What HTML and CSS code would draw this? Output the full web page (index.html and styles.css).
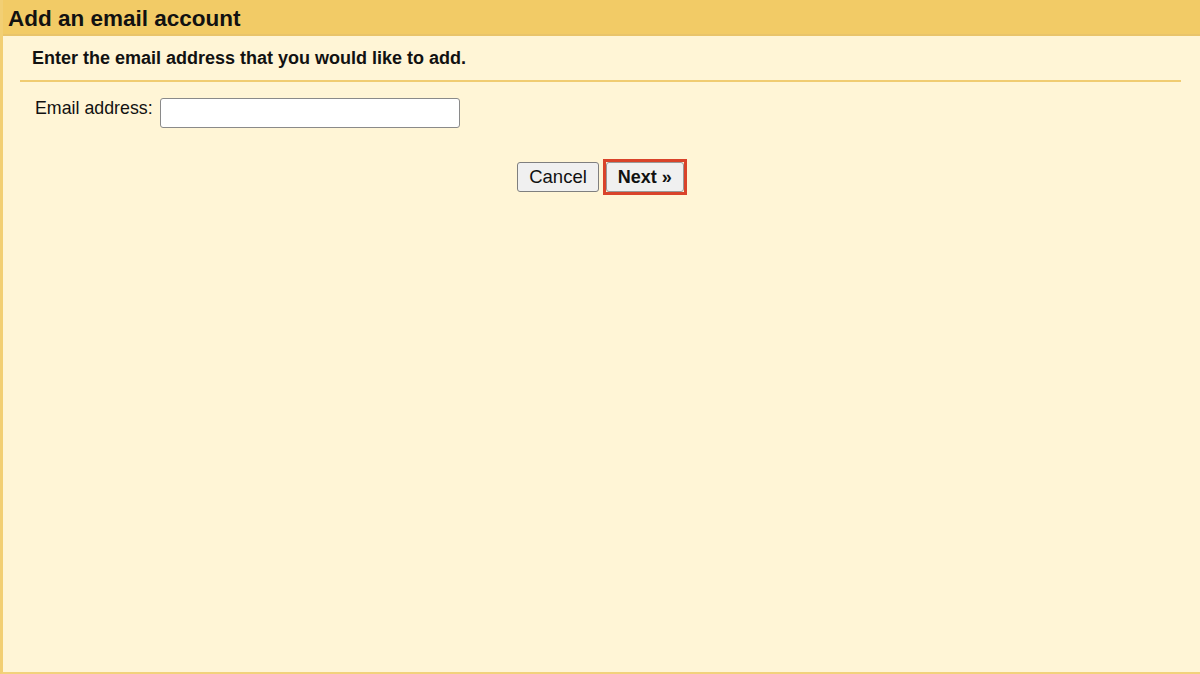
FILE: index.html
```html
<!DOCTYPE html>
<html>
<head>
<meta charset="utf-8">
<link rel="stylesheet" href="styles.css">
</head>
<body>
<div class="page">
  <div class="titlebar">Add an email account</div>
  <div class="content">
    <div class="section">
      <div class="heading">Enter the email address that you would like to add.</div>
      <div class="row">
        <label class="label" for="email">Email address:</label>
        <input class="input" id="email" type="text">
      </div>
      <div class="buttons">
        <button class="btn">Cancel</button>
        <span class="highlight"><button class="btn btn-bold">Next »</button></span>
      </div>
    </div>
  </div>
</div>
</body>
</html>
```
FILE: styles.css
```css
html, body {
  margin: 0;
  padding: 0;
  width: 1200px;
  height: 674px;
  overflow: hidden;
  font-family: "Liberation Sans", Arial, sans-serif;
  background: #fff5d6;
}
.page {
  height: 674px;
  display: flex;
  flex-direction: column;
  box-sizing: border-box;
  border-left: 3px solid #f2cf74;
  border-bottom: 2px solid #f2d27c;
  background: #fff5d6;
}
.titlebar {
  height: 36px;
  background: #f2cb66;
  border-bottom: 2px solid #e9c46a;
  box-sizing: border-box;
  font-size: 22.5px;
  font-weight: bold;
  color: #111;
  line-height: 37px;
  padding-left: 5px;
}
.content {
  flex: 1;
  padding: 0 19px 0 17px;
}
.section {
  display: flex;
  flex-direction: column;
}
.heading {
  font-size: 18px;
  font-weight: bold;
  color: #111;
  padding: 11px 0 11px 12px;
  border-bottom: 2px solid #f0cc72;
  line-height: 22px;
}
.row {
  display: flex;
  align-items: center;
  padding: 16px 0 0 15px;
}
.label {
  font-size: 17.8px;
  color: #111;
  margin-right: 7px;
  position: relative;
  top: -5px;
}
.input {
  width: 300px;
  height: 30px;
  box-sizing: border-box;
  border: 1px solid #8a8a8a;
  border-radius: 3px;
  background: #fff;
  margin: 0;
}
.buttons {
  display: flex;
  justify-content: center;
  align-items: center;
  gap: 4px;
  margin-top: 31px;
  padding-left: 3px;
}
.btn {
  font-family: "Liberation Sans", Arial, sans-serif;
  font-size: 18.5px;
  color: #111;
  background: #f0f0f0;
  border: 1px solid #7f7f7f;
  border-radius: 3px;
  height: 30px;
  padding: 0 11px;
  margin: 0;
}
.btn-bold {
  font-weight: bold;
  border-color: #999;
  font-size: 18px;
}
.highlight {
  display: inline-flex;
  border: 3px solid #d9432a;
}
```
